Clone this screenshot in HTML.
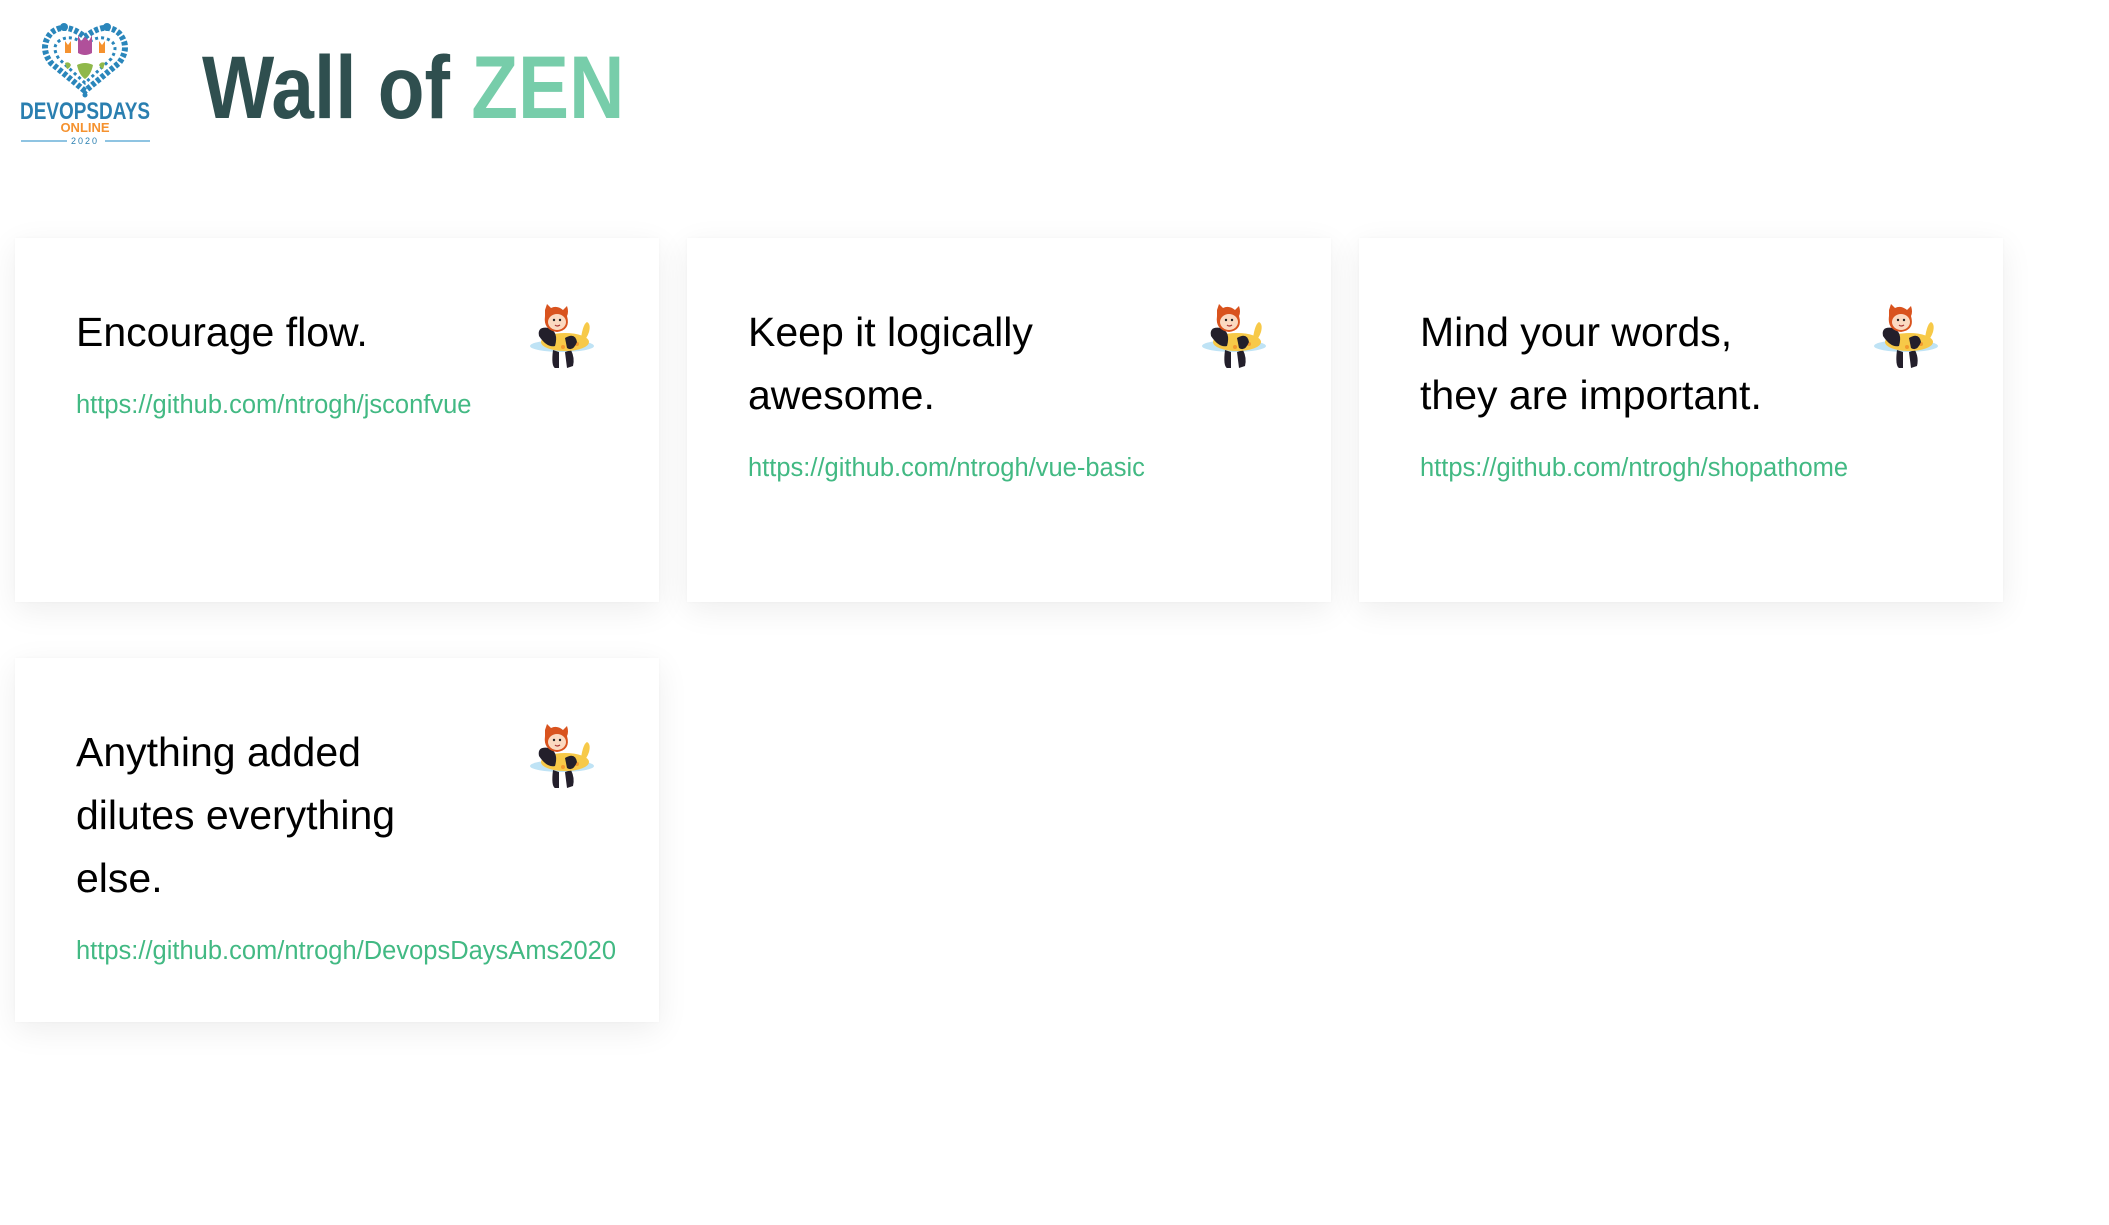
<!DOCTYPE html>
<html><head><meta charset="utf-8"><style>
html,body{margin:0;padding:0;background:#fff;width:2109px;height:1225px;overflow:hidden;font-family:"Liberation Sans",sans-serif}
.logo{position:absolute;left:19px;top:13px;width:133px;height:133px}
h1{position:absolute;left:202px;top:27px;margin:0;font-size:89px;font-weight:bold;color:#2f4f4f;line-height:120px;transform:scaleX(0.86);transform-origin:0 0;white-space:nowrap}
h1 span{color:#77cdaa}
.card{position:absolute;width:644px;height:364px;background:#fff;box-shadow:0 8px 30px rgba(0,0,0,.07),0 0 3px rgba(0,0,0,.03);box-sizing:border-box;padding:63px 0 0 61px}
.t{font-size:41px;line-height:63px;color:#000;margin:0}
.l{display:block;font-size:25.5px;line-height:36px;color:#42b983;margin-top:23px;text-decoration:none}
.oc{position:absolute;left:510px;top:64px;width:74px;height:68px}
</style></head><body>
<svg class="logo" viewBox="0 0 133 133">
<g fill="#2a86bb">
<path d="M66 78 L32 50 Q20 34 32 20 Q46 8 66 24 Q86 8 100 20 Q112 34 100 50 Z" fill="none" stroke="#2a86bb" stroke-width="6" stroke-dasharray="4 2"/>
<path d="M66 70 L40 46 Q32 34 40 28 Q52 20 66 32 Q80 20 92 28 Q100 34 92 46 Z" fill="none" stroke="#2a86bb" stroke-width="3" stroke-dasharray="3 3"/>
<circle cx="45" cy="14" r="4"/><circle cx="88" cy="14" r="4"/><circle cx="66" cy="82" r="2.5"/>
</g>
<path d="M59 22 L62 28 L66 24 L70 28 L73 22 L73 40 Q66 44 59 40 Z" fill="#b0509a"/>
<path d="M46 28 L49 32 L52 28 L52 40 L46 40 Z M80 28 L83 32 L86 28 L86 40 L80 40 Z" fill="#f5922f"/>
<path d="M58 52 Q66 48 74 52 Q72 62 66 66 Q60 62 58 52 Z" fill="#8fb84a"/>
<path d="M46 50 Q50 48 52 52 Q50 56 48 56 Z M86 50 Q82 48 80 52 Q82 56 84 56 Z" fill="#8fb84a"/>
<text x="66" y="106" text-anchor="middle" font-family="Liberation Sans" font-weight="bold" font-size="24" fill="#2a7fb0" textLength="130" lengthAdjust="spacingAndGlyphs">DEVOPSDAYS</text>
<text x="66" y="119" text-anchor="middle" font-family="Liberation Sans" font-weight="bold" font-size="13" fill="#f5922f">ONLINE</text>
<text x="66" y="131" text-anchor="middle" font-family="Liberation Sans" font-size="9" fill="#2a7fb0" letter-spacing="2">2020</text>
<path d="M2 128 H48 M86 128 H131" stroke="#6ab0d8" stroke-width="1.5"/>
</svg>
<h1>Wall of <span>ZEN</span></h1>

<div class="card" style="left:15px;top:238px"><p class="t">Encourage flow.</p><a class="l">https://github.com/ntrogh/jsconfvue</a>
<svg class="oc" viewBox="0 0 74 68"><use href="#cat"/></svg></div>
<div class="card" style="left:687px;top:238px"><p class="t">Keep it logically<br>awesome.</p><a class="l">https://github.com/ntrogh/vue-basic</a>
<svg class="oc" viewBox="0 0 74 68"><use href="#cat"/></svg></div>
<div class="card" style="left:1359px;top:238px"><p class="t">Mind your words,<br>they are important.</p><a class="l">https://github.com/ntrogh/shopathome</a>
<svg class="oc" viewBox="0 0 74 68"><use href="#cat"/></svg></div>
<div class="card" style="left:15px;top:658px"><p class="t">Anything added<br>dilutes everything<br>else.</p><a class="l">https://github.com/ntrogh/DevopsDaysAms2020</a>
<svg class="oc" viewBox="0 0 74 68"><use href="#cat"/></svg></div>

<svg width="0" height="0" style="position:absolute"><defs><g id="cat">
<ellipse cx="37" cy="44" rx="32" ry="6" fill="#bfe3f5"/>
<path d="M28 48 Q26 64 30 66 L34 66 L34 50 Z M40 50 L42 66 L48 64 Q50 56 46 48 Z" fill="#231f2b"/>
<ellipse cx="40" cy="40" rx="24" ry="9" fill="#f7c948"/>
<circle cx="26" cy="40" r="2" fill="#f29a2e"/><circle cx="38" cy="45" r="2" fill="#f29a2e"/><circle cx="52" cy="42" r="2" fill="#f29a2e"/>
<path d="M56 36 Q58 22 62 20 Q66 22 64 30 Q62 36 58 40 Z" fill="#f7c948"/>
<path d="M14 34 Q12 24 24 26 Q34 30 30 44 Q22 46 14 34 Z" fill="#231f2b"/>
<path d="M40 36 Q50 30 52 40 Q48 50 42 46 Z" fill="#231f2b"/>
<path d="M20 8 L22 2 L26 6 Q32 3 38 8 L42 4 Q44 10 42 14 Q46 28 32 30 Q18 28 20 14 Z" fill="#d9531e"/>
<ellipse cx="32" cy="20" rx="9" ry="8" fill="#fbd9c0"/>
<circle cx="29" cy="18" r="1.2" fill="#222"/><circle cx="35" cy="18" r="1.2" fill="#222"/>
<path d="M30 23 Q32 25 35 23" stroke="#a33" stroke-width="1.2" fill="none"/>
</g></defs></svg>
</body></html>
